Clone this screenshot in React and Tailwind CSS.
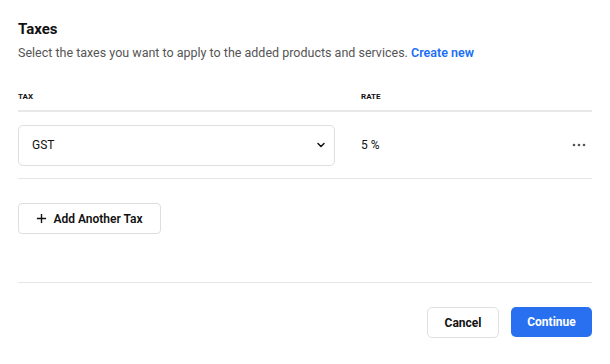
import React from "react";

export default function App() {
  return (
    <div className="w-[610px] h-[364px] bg-white px-[18px] pt-[19px] font-['Roboto',sans-serif] text-[#111]">
      <h2 className="text-[15px] font-bold leading-5">Taxes</h2>
      <p className="mt-[6px] text-[12.5px] leading-4 text-[#555]">
        Select the taxes you want to apply to the added products and services.{" "}
        <a className="font-semibold text-[#1a6ef5]">Create new</a>
      </p>

      <div className="mt-[30px] flex text-[8px] font-bold leading-3 text-[#111]">
        <div className="w-[343px]">TAX</div>
        <div>RATE</div>
      </div>
      <div className="mt-[7px] h-[2px] bg-[#e8e8e8]" />

      <div className="flex items-center h-[67px] border-b border-[#e6e6e6]">
        <div className="w-[317px] h-[41px] rounded-[5px] border border-[#dedede] flex items-center justify-between pl-[13px] pr-[7px]">
          <span className="text-[12px]">GST</span>
          <svg width="12" height="12" viewBox="0 0 24 24" fill="none" stroke="#111" strokeWidth="3" strokeLinecap="round" strokeLinejoin="round">
            <path d="M6 9l6 6 6-6" />
          </svg>
        </div>
        <div className="ml-[26px] text-[12px] flex-1">5 %</div>
        <svg width="14" height="4" viewBox="0 0 14 4" className="mr-[6px]" fill="#555">
          <circle cx="2" cy="2" r="1.3" />
          <circle cx="7" cy="2" r="1.3" />
          <circle cx="12" cy="2" r="1.3" />
        </svg>
      </div>

      <button className="mt-[24px] h-[31px] w-[143px] rounded-[4px] border border-[#dedede] flex items-center justify-center gap-[6px] text-[12px] font-semibold">
        <svg width="11" height="11" viewBox="0 0 12 12" stroke="#111" strokeWidth="1.5">
          <path d="M6 1v10M1 6h10" />
        </svg>
        Add Another Tax
      </button>

      <div className="mt-[48px] h-px bg-[#e6e6e6]" />

      <div className="mt-[24px] flex justify-end gap-[12px]">
        <button className="h-[31px] w-[72px] rounded-[5px] border border-[#e0e0e0] text-[12px] font-bold">Cancel</button>
        <button className="h-[30px] w-[81px] rounded-[5px] bg-[#2970f0] text-white text-[12px] font-bold">Continue</button>
      </div>
    </div>
  );
}
